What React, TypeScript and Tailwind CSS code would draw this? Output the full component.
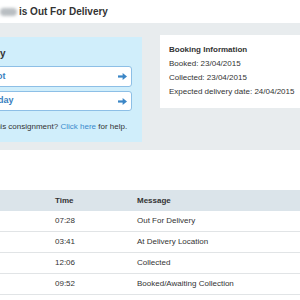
import { Fragment } from "react";

const events = [
  { time: "07:28", message: "Out For Delivery" },
  { time: "03:41", message: "At Delivery Location" },
  { time: "12:06", message: "Collected" },
  { time: "09:52", message: "Booked/Awaiting Collection" },
];

const Arrow = () => (
  <svg width="9" height="7" viewBox="0 0 9 7" className="shrink-0">
    <rect x="0" y="2.4" width="5" height="2.2" fill="#3b86c6" />
    <path d="M4.6 0 L9 3.5 L4.6 7 Z" fill="#3b86c6" />
  </svg>
);

const App = () => {
  return (
    <div className="w-[300px] h-[300px] overflow-hidden bg-white text-[#333] font-['Liberation_Sans',Arial,sans-serif]">
      {/* Page title */}
      <header className="h-[23px] flex items-center">
        <span className="w-[17px] h-[8px] mr-[2px] rounded-sm bg-[#b9bec2] blur-[1.5px]" />
        <h1 className="text-[10px] font-bold leading-none">is Out For Delivery</h1>
      </header>

      {/* Options + booking info */}
      <section className="h-[127px] bg-[#e8ecee] flex overflow-hidden">
        <div className="mt-[14px] w-[142px] h-[105px] shrink-0 bg-[#d0eefb] overflow-hidden">
          <div className="ml-[-89px] w-[221px] pt-[11px]">
            <h2 className="text-[10px] font-bold leading-[12px] whitespace-nowrap">Change my delivery</h2>
            <div className="mt-[6px] flex flex-col gap-[4px]">
              <div className="h-[21px] bg-white border border-[#8dbfe6] rounded-[3px] flex items-center justify-between pl-[14px] pr-[4px]">
                <span className="text-[9px] font-bold text-[#3a7fc0] whitespace-nowrap">Collect from depot</span>
                <Arrow />
              </div>
              <div className="h-[20px] bg-white border border-[#8dbfe6] rounded-[3px] flex items-center justify-between pl-[14px] pr-[4px]">
                <span className="text-[9px] font-bold text-[#3a7fc0] whitespace-nowrap">Change delivery day</span>
                <Arrow />
              </div>
            </div>
            <p className="mt-[10px] pl-[4px] text-[8px] leading-[12px] whitespace-nowrap">
              Having problems with this consignment?{" "}
              <span className="text-[#3a8acc]">Click here</span> for help.
            </p>
          </div>
        </div>

        <div className="mt-[12px] ml-[18px] w-[160px] h-[73px] shrink-0 bg-white pt-[8px] pl-[9px] text-[8px] leading-[14px] whitespace-nowrap">
          <div className="font-bold">Booking Information</div>
          <div>Booked: 23/04/2015</div>
          <div>Collected: 23/04/2015</div>
          <div>Expected delivery date: 24/04/2015</div>
        </div>
      </section>

      <div className="h-[40px] bg-white" />

      {/* Tracking history */}
      <div className="grid grid-cols-[55px_82px_1fr] text-[8px]">
        <div className="h-[21px] bg-[#dbe4ea]" />
        <div className="h-[21px] bg-[#dbe4ea] flex items-center font-bold">Time</div>
        <div className="h-[21px] bg-[#dbe4ea] flex items-center font-bold">Message</div>
        {events.map((e) => (
          <Fragment key={e.time}>
            <div className="h-[21px] border-b border-[#e1e4e6]" />
            <div className="h-[21px] border-b border-[#e1e4e6] flex items-center">{e.time}</div>
            <div className="h-[21px] border-b border-[#e1e4e6] flex items-center">{e.message}</div>
          </Fragment>
        ))}
      </div>
    </div>
  );
};

export default App;
